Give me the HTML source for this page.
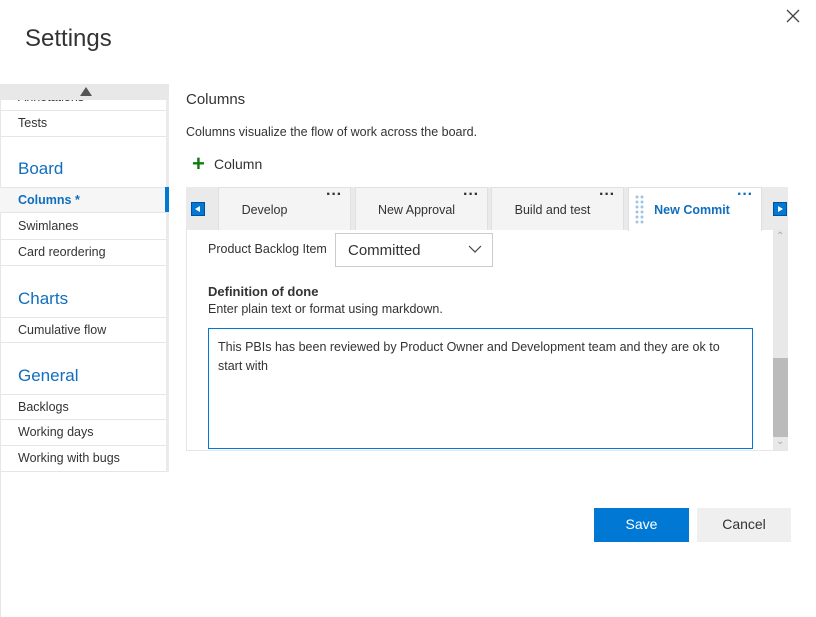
<!DOCTYPE html>
<html><head><style>
*{box-sizing:border-box;margin:0;padding:0}
body{width:816px;height:617px;background:#fff;font-family:"Segoe UI","Liberation Sans",sans-serif;color:#333;position:relative;overflow:hidden;font-size:13px}
.a{position:absolute}
.nav .it{position:absolute;left:0;width:166px;height:26px;border-bottom:1px solid #e6e6e6;padding-left:18px;line-height:25px;font-size:12.5px;color:#333}
.nav h3{position:absolute;left:18px;font-weight:normal;font-size:17px;color:#106ebe}
.tab{position:absolute;top:187px;height:43px;background:#f4f4f4;border:1px solid #e0e0e0;border-bottom:none;text-align:center;line-height:44px;font-size:12.5px;color:#333;padding-right:10px}
.dots{position:absolute;right:8px;top:-15px;font-size:16px;color:#333;font-weight:bold}
.arr{position:absolute;width:14px;height:14px;background:#0078d4;border:1px solid #0050a0}
</style></head><body>
<div class="a" style="left:25px;top:25px;font-size:24px;color:#333;font-weight:300">Settings</div>
<svg class="a" style="left:786px;top:9px" width="14" height="14"><path d="M1 1L13 13M13 1L1 13" stroke="#444" stroke-width="1.3"/></svg>
<div class="a" style="left:0;top:84px;width:1px;height:533px;background:#e6e6e6"></div>
<div class="nav">
<div class="a" style="left:0;top:84px;width:169px;height:16px;background:#e8e8e8"></div>
<div class="a" style="left:80px;top:87px;width:0;height:0;border-left:6px solid transparent;border-right:6px solid transparent;border-bottom:9px solid #555"></div>
<div class="a" style="left:166px;top:100px;width:3px;height:372px;background:#eaeaea"></div>
<div class="it" style="top:85px;height:26px;line-height:24px;overflow:hidden;color:#333;clip-path:inset(15px 0 0 0)">Annotations</div>
<div class="it" style="top:111px">Tests</div>
<h3 style="top:159px">Board</h3>
<div class="it" style="top:187px;background:#f6f6f6;font-weight:bold;color:#106ebe;border-top:1px solid #e6e6e6">Columns *</div>
<div class="a" style="left:165px;top:187px;width:4px;height:25px;background:#0078d4"></div>
<div class="it" style="top:214px">Swimlanes</div>
<div class="it" style="top:240px">Card reordering</div>
<h3 style="top:289px">Charts</h3>
<div class="it" style="top:317px;border-top:1px solid #e6e6e6">Cumulative flow</div>
<h3 style="top:366px">General</h3>
<div class="it" style="top:394px;border-top:1px solid #e6e6e6">Backlogs</div>
<div class="it" style="top:420px">Working days</div>
<div class="it" style="top:446px">Working with bugs</div>
</div>
<div class="a" style="left:186px;top:91px;font-size:15px;color:#333">Columns</div>
<div class="a" style="left:186px;top:125px;font-size:12.5px">Columns visualize the flow of work across the board.</div>
<div class="a" style="left:192px;top:152px;font-size:22px;color:#107c10;font-weight:bold;line-height:24px">+</div>
<div class="a" style="left:214px;top:156px;font-size:14px">Column</div>
<div class="a" style="left:186px;top:187px;width:602px;height:43px;background:#eaeaea"></div>
<div class="arr" style="left:191px;top:202px"><div class="a" style="left:3px;top:3px;border-top:3.5px solid transparent;border-bottom:3.5px solid transparent;border-right:5px solid #fff"></div></div>
<div class="tab" style="left:218px;width:133px;padding-right:40px">Develop<span class="dots">···</span></div>
<div class="tab" style="left:355px;width:133px">New Approval<span class="dots">···</span></div>
<div class="tab" style="left:491px;width:133px">Build and test<span class="dots">···</span></div>
<div class="tab" style="left:628px;width:134px;background:#fff;height:44px;font-weight:bold;color:#106ebe;padding-left:0;padding-right:6px">New Commit<span class="dots" style="color:#106ebe">···</span>
<svg class="a" style="left:5px;top:7px" width="12" height="30"><g fill="#9ec5e3"><circle cx="3" cy="2" r="1.5"/><circle cx="8" cy="2" r="1.5"/><circle cx="3" cy="7" r="1.5"/><circle cx="8" cy="7" r="1.5"/><circle cx="3" cy="12" r="1.5"/><circle cx="8" cy="12" r="1.5"/><circle cx="3" cy="17" r="1.5"/><circle cx="8" cy="17" r="1.5"/><circle cx="3" cy="22" r="1.5"/><circle cx="8" cy="22" r="1.5"/><circle cx="3" cy="27" r="1.5"/><circle cx="8" cy="27" r="1.5"/></g></svg></div>
<div class="arr" style="left:773px;top:202px"><div class="a" style="left:4px;top:3px;border-top:3.5px solid transparent;border-bottom:3.5px solid transparent;border-left:5px solid #fff"></div></div>
<div class="a" style="left:186px;top:230px;width:1px;height:221px;background:#e6e6e6"></div>
<div class="a" style="left:186px;top:450px;width:602px;height:1px;background:#e6e6e6"></div>
<div class="a" style="left:773px;top:230px;width:15px;height:220px;background:#e8e8e8"></div>
<div class="a" style="left:773px;top:358px;width:15px;height:79px;background:#bbb"></div>
<div class="a" style="left:776px;top:231px;font-size:10px;color:#aaa">⌃</div>
<div class="a" style="left:776px;top:436px;font-size:10px;color:#aaa">⌄</div>
<div class="a" style="left:208px;top:242px;font-size:12.5px">Product Backlog Item</div>
<div class="a" style="left:335px;top:233px;width:158px;height:34px;border:1px solid #ccc;font-size:15px;padding:8px 12px;line-height:17px">Committed</div>
<svg class="a" style="left:468px;top:245px" width="14" height="9"><path d="M1 1 L7 7 L13 1" fill="none" stroke="#444" stroke-width="1.2"/></svg>
<div class="a" style="left:208px;top:284px;font-size:13px;font-weight:bold">Definition of done</div>
<div class="a" style="left:208px;top:302px;font-size:12.5px">Enter plain text or format using markdown.</div>
<div class="a" style="left:208px;top:328px;width:545px;height:121px;border:1px solid #0078d4;padding:9px;font-size:12.5px;line-height:19px">This PBIs has been reviewed by Product Owner and Development team and they are ok to start with</div>
<div class="a" style="left:594px;top:508px;width:95px;height:34px;background:#0078d4;color:#fff;text-align:center;line-height:33px;font-size:14px">Save</div>
<div class="a" style="left:697px;top:508px;width:94px;height:34px;background:#efefef;color:#333;text-align:center;line-height:33px;font-size:14px">Cancel</div>
</body></html>
